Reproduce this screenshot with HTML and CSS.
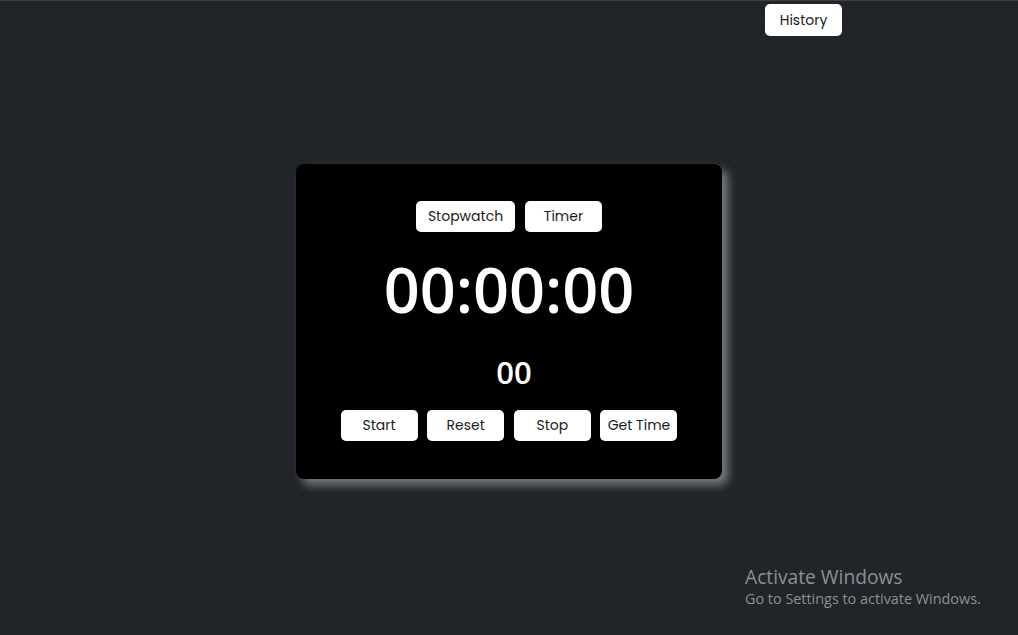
FILE: index.html
```html
<!DOCTYPE html>
<html lang="en">
<head>
<meta charset="utf-8">
<title>Stopwatch</title>
<link rel="stylesheet" href="styles.css">
</head>
<body>
<header class="topbar">
  <button class="btn btn-history">History</button>
</header>
<main class="stage">
  <section class="card">
    <div class="modes">
      <button class="btn btn-wide">Stopwatch</button>
      <button class="btn">Timer</button>
    </div>
    <div class="clock">00:00:00</div>
    <div class="millis">00</div>
    <div class="controls">
      <button class="btn">Start</button>
      <button class="btn">Reset</button>
      <button class="btn">Stop</button>
      <button class="btn">Get Time</button>
    </div>
  </section>
</main>
<div class="activate">
  <div class="activate-title">Activate Windows</div>
  <div class="activate-sub">Go to Settings to activate Windows.</div>
</div>
</body>
</html>
```
FILE: styles.css
```css
html, body {
  margin: 0;
  padding: 0;
}
body {
  height: 100vh;
  background: #212429;
  border-top: 1px solid #3a3f45;
  box-sizing: border-box;
  display: flex;
  flex-direction: column;
  font-family: "Poppins", Inter, "Noto Sans", sans-serif;
  overflow: hidden;
}
.topbar {
  height: 39px;
  display: flex;
  justify-content: flex-end;
  align-items: flex-start;
  padding: 3px 176px 0 0;
  box-sizing: border-box;
}
.btn {
  font-family: "Poppins", Inter, "Noto Sans", sans-serif;
  font-size: 14px;
  color: #1b1b1b;
  background: #fff;
  border: none;
  border-radius: 5px;
  width: 77px;
  height: 31px;
  padding: 0;
  cursor: pointer;
}
.btn-history {
  height: 32px;
}
.btn-wide {
  width: 99px;
}
.stage {
  flex: 1;
  display: flex;
  align-items: center;
  justify-content: center;
  padding-bottom: 33px;
}
.card {
  width: 426px;
  height: 315px;
  box-sizing: border-box;
  background: #000;
  border-radius: 8px;
  box-shadow: 6px 6px 10px rgba(150, 152, 155, 0.75);
  padding-top: 37px;
  display: flex;
  flex-direction: column;
  align-items: center;
  color: #fff;
}
.modes {
  display: flex;
  gap: 10px;
}
.controls {
  display: flex;
  gap: 9.67px;
  margin-top: 22px;
}
.controls .btn {
  height: 31.5px;
}
.clock {
  font-family: "Open Sans", "Noto Sans", sans-serif;
  font-size: 63px;
  font-weight: 600;
  line-height: 1;
  margin-top: 25px;
}
.millis {
  font-family: "Open Sans", "Noto Sans", sans-serif;
  font-size: 31px;
  font-weight: 600;
  line-height: 1;
  margin-top: 37px;
  margin-left: 10px;
}
.activate {
  position: absolute;
  left: 745px;
  top: 564px;
  color: #8d9094;
  font-family: "Open Sans", "Noto Sans", sans-serif;
}
.activate-title {
  font-size: 19.2px;
  line-height: 25px;
}
.activate-sub {
  font-size: 14.4px;
  line-height: 20px;
}
```
